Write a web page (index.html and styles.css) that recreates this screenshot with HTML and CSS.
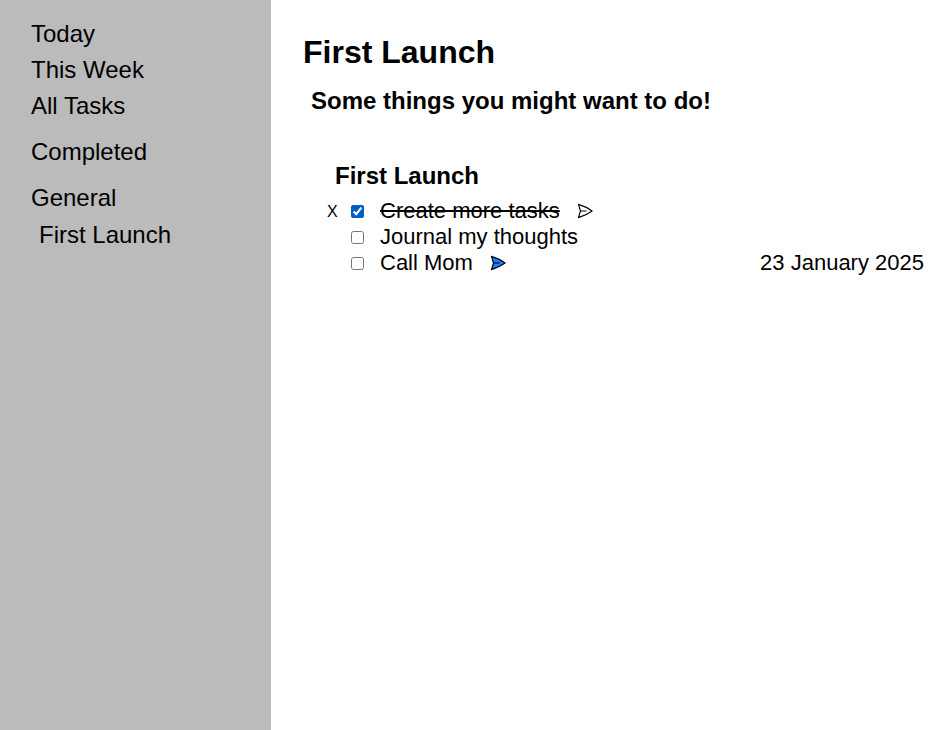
FILE: index.html
```html
<!DOCTYPE html>
<html lang="en">
<head>
<meta charset="utf-8">
<meta name="viewport" content="width=device-width, initial-scale=1">
<title>Tasks</title>
<link rel="stylesheet" href="styles.css">
</head>
<body>
<nav class="sidebar">
  <ul class="nav-group">
    <li><a href="#today">Today</a></li>
    <li><a href="#week">This Week</a></li>
    <li><a href="#all">All Tasks</a></li>
  </ul>
  <ul class="nav-group">
    <li><a href="#completed">Completed</a></li>
  </ul>
  <ul class="nav-group">
    <li><a href="#general">General</a></li>
    <li class="nested"><a href="#first-launch">First Launch</a></li>
  </ul>
</nav>
<main class="content">
  <h1>First Launch</h1>
  <h2>Some things you might want to do!</h2>
  <section class="project">
    <h3>First Launch</h3>
    <ul class="tasks">
      <li class="task">
        <button class="remove" type="button">X</button>
        <input type="checkbox" id="task-1" checked>
        <label class="done" for="task-1">Create more tasks</label>
        <svg class="flag" viewBox="0 0 24 24"><path d="M6 12 3.269 3.125A59.769 59.769 0 0 1 21.485 12 59.768 59.768 0 0 1 3.27 20.875L6 12Zm0 0h7.5"/></svg>
      </li>
      <li class="task">
        <input type="checkbox" id="task-2">
        <label for="task-2">Journal my thoughts</label>
      </li>
      <li class="task">
        <input type="checkbox" id="task-3">
        <label for="task-3">Call Mom</label>
        <svg class="flag active" viewBox="0 0 24 24"><path d="M6 12 3.269 3.125A59.769 59.769 0 0 1 21.485 12 59.768 59.768 0 0 1 3.27 20.875L6 12Zm0 0h7.5"/></svg>
        <time datetime="2025-01-23">23 January 2025</time>
      </li>
    </ul>
  </section>
</main>
</body>
</html>
```
FILE: styles.css
```css
* {
  box-sizing: border-box;
  margin: 0;
  padding: 0;
}

body {
  display: grid;
  grid-template-columns: 271px 1fr;
  min-height: 100vh;
  font-family: "Liberation Sans", Arial, sans-serif;
  color: #000;
  background: #fff;
}

ul {
  list-style: none;
}

.sidebar {
  display: flex;
  flex-direction: column;
  gap: 10px;
  padding: 16px 31px;
  background: #bbb;
  font-size: 24px;
  line-height: 36px;
}

.sidebar a {
  color: inherit;
  text-decoration: none;
}

.nested {
  padding: 1px 0 0 8px;
}

.content {
  padding: 32px 13px 32px 32px;
}

h1 {
  font-size: 32px;
  line-height: 40px;
}

h2 {
  padding: 15px 8px 0;
  font-size: 24px;
  line-height: 28px;
}

.project {
  padding: 47px 0 0 24px;
}

h3 {
  padding-left: 8px;
  font-size: 24px;
  line-height: 28px;
}

.tasks {
  padding-top: 8px;
}

.task {
  display: grid;
  grid-template-columns: 24px 13px auto 18px 1fr;
  align-items: center;
  min-height: 26px;
  font-size: 22px;
  line-height: 26px;
}

.remove {
  grid-column: 1;
  justify-self: start;
  border: 0;
  background: none;
  font: inherit;
  font-size: 16px;
  line-height: 20px;
  padding-top: 1px;
}

.task input {
  grid-column: 2;
  width: 13px;
  height: 13px;
  accent-color: #005cc8;
}

.task label {
  grid-column: 3;
  padding: 0 16px;
}

.done {
  text-decoration: line-through;
}

.flag {
  grid-column: 4;
  width: 18px;
  height: 18px;
  fill: none;
  stroke: #000;
  stroke-width: 1.5;
  stroke-linecap: round;
  stroke-linejoin: round;
}

.flag.active {
  fill: #1a7cff;
}

.task time {
  grid-column: 5;
  justify-self: end;
}
```
